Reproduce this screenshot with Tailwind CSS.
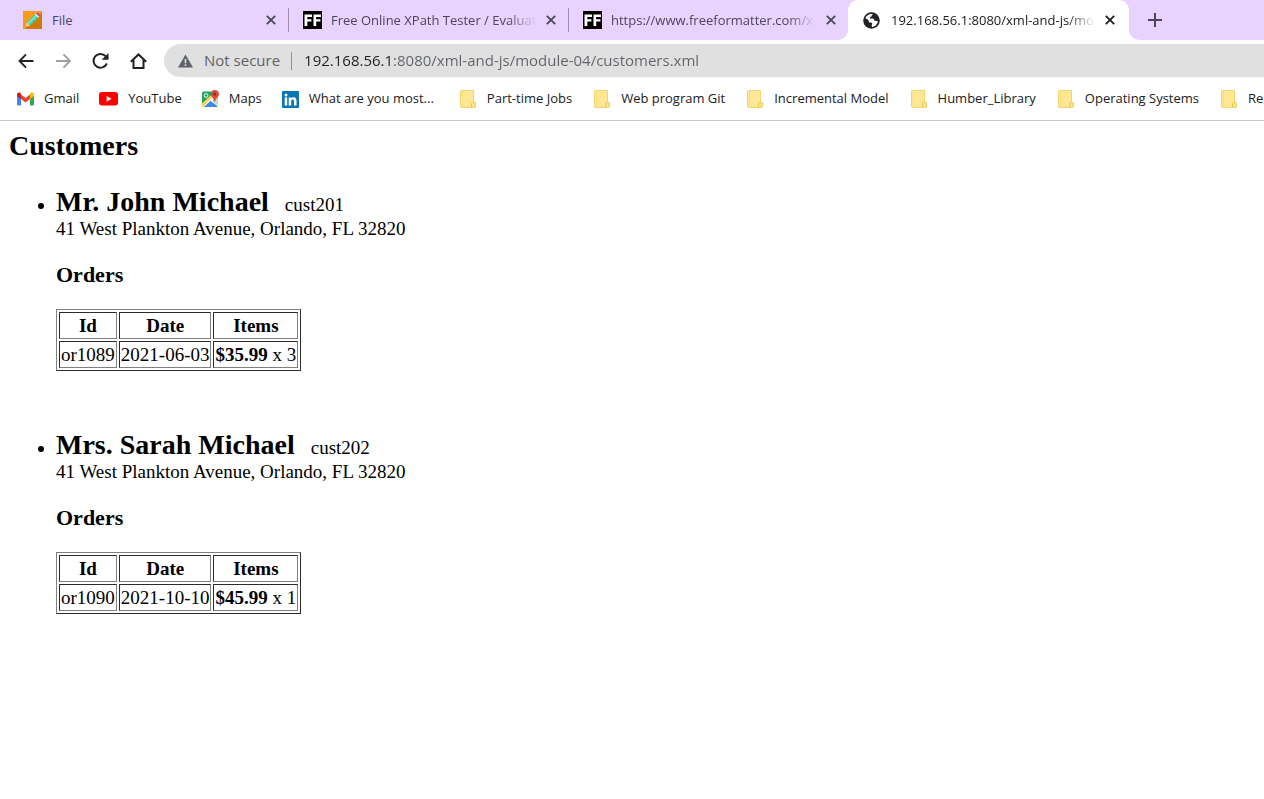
<!DOCTYPE html>
<html lang="en">
<head>
<meta charset="utf-8">
<title>Customers</title>
<script src="https://cdn.jsdelivr.net/npm/@tailwindcss/browser@4"></script>
</head>
<body class="min-h-screen overflow-x-hidden bg-white text-[#202124]">
<svg class="hidden" aria-hidden="true">
  <symbol id="close" viewBox="0 0 10 10"><path d="M.8.8l8.400 8.400M9.200.8L.8 9.200" fill="none" stroke="currentColor" stroke-width="1.900"/></symbol>
  <symbol id="ff" viewBox="0 0 19 18"><path d="M0 0h19v18H0z" fill="#000"/><path d="M1.500 3.500H9v2.400H4.300v2.300h4.100v2.400H4.300V15H1.500zM10.500 3.500H18v2.400h-4.800v2.300h4.200v2.400h-4.200V15h-2.700z" fill="#fff"/></symbol>
  <symbol id="folder" viewBox="0 0 17 18"><path d="M1.500.5H13.500v12h1.200c.5 0 .8.3.8.8v2.200c0 1.100-.8 2-1.900 2H1.500c-.6 0-1-.4-1-1v-15c0-.6.4-1 1-1z" fill="#ffe793" stroke="#efd56e"/><path d="M2.500 1v15.500" stroke="#f8df80"/><path d="M11.500 17v-3c0-1 .6-1.500 1.500-1.500s2.500 0 2.500 1.200v1.500c0 1.300-.8 2.300-2 2.300" fill="#ffe48a" stroke="#e6c850"/></symbol>
</svg>

<header class="font-['Open_Sans','Noto_Sans',sans-serif]">
  <div class="flex h-10 bg-white text-[13px] text-[#4d4558]" role="tablist" aria-label="Open tabs">
    <div class="flex shrink-0 rounded-br-[10px] bg-[#e8d3ff] pl-[9px]">
      <div class="flex w-[280px] items-center pl-[14px]">
        <button role="tab" class="flex min-w-0 flex-1 items-center gap-[10px] text-left">
          <svg class="h-[18px] w-[19px] shrink-0" viewBox="0 0 19 18"><path d="M0 0h19v18H0z" fill="#f79a1b"/><path d="M19 1.500V18H2l2-3z" fill="#cf7a08"/><path d="M2.600 15.700l1.200-4.300 3.200 3.200z" fill="#ffd9a0"/><path d="M3.800 11.400l8-8 3.400 3.300-8.200 7.900z" fill="#3fd3b4"/><path d="M5.200 12.700l8-8" stroke="#8df0d8" stroke-width="1.200"/><path d="M11.800 3.400l1.200-1 3.300 3.100-1.100 1.200z" fill="#dfe8f2"/><path d="M13 2.400c1-.9 2-.5 2.700.2s1.300 1.900.6 2.900z" fill="#a03fb8"/></svg>
          <span class="pt-[2px]">File</span>
        </button>
        <button aria-label="Close File"><svg class="size-[10px]"><use href="#close"/></svg></button>
        <span class="ml-3 h-6 w-px bg-[#9d8fae]"></span>
      </div>
      <div class="flex w-[280px] items-center pl-[14px]">
        <button role="tab" class="flex min-w-0 flex-1 items-center gap-[9px] text-left">
          <svg class="h-[18px] w-[19px] shrink-0"><use href="#ff"/></svg>
          <span class="mr-[10px] flex-1 overflow-hidden pt-[2px] whitespace-nowrap [mask-image:linear-gradient(to_left,transparent,black_28px)]">Free Online XPath Tester / Evaluat</span>
        </button>
        <button aria-label="Close Free Online XPath Tester"><svg class="size-[10px]"><use href="#close"/></svg></button>
        <span class="ml-3 h-6 w-px bg-[#9d8fae]"></span>
      </div>
      <div class="flex w-[279px] items-center pr-3 pl-[14px]">
        <button role="tab" class="flex min-w-0 flex-1 items-center gap-[9px] text-left">
          <svg class="h-[18px] w-[19px] shrink-0"><use href="#ff"/></svg>
          <span class="mr-[10px] flex-1 overflow-hidden pt-[2px] whitespace-nowrap [mask-image:linear-gradient(to_left,transparent,black_28px)]">https://www.freeformatter.com/x</span>
        </button>
        <button aria-label="Close freeformatter.com"><svg class="size-[10px]"><use href="#close"/></svg></button>
      </div>
    </div>
    <div class="flex shrink-0 bg-[#e8d3ff]">
      <div class="flex w-[281px] items-center rounded-t-[10px] bg-white pr-[14px] pl-[15px] text-[#202124]">
        <button role="tab" aria-selected="true" class="flex min-w-0 flex-1 items-center gap-[11px] text-left">
          <svg class="size-[17px] shrink-0" viewBox="0 0 17 17"><circle cx="8.500" cy="8.500" r="8.300" fill="#202124"/><path d="M2.300 6.200C3.200 3.700 5.600 2 8.200 2c.9 0 1.400.1 1.900.3-.7.500-1.500.7-1.500 1.600 0 .6-.4.900-1 .9-.6.100-.9.500-.8 1 .1.700.8.800 1.900.8 1.500 0 2.300.4 2.500 1.500.2.800 1 .9 1.900.9h1.700c-.1 3-2.500 5.600-5.500 5.900-.5-.4-.7-.9-.6-1.700.1-.7.500-.9.500-1.600-.1-.9-1-.9-2-1-1.300-.1-1.500-.7-1.600-1.800-.1-.8-.7-1.300-1.300-1.600z" fill="#fff"/></svg>
          <span class="mr-[10px] flex-1 overflow-hidden pt-[2px] whitespace-nowrap [mask-image:linear-gradient(to_left,transparent,black_28px)]">192.168.56.1:8080/xml-and-js/mo</span>
        </button>
        <button aria-label="Close current tab"><svg class="size-[10px]"><use href="#close"/></svg></button>
      </div>
    </div>
    <div class="flex flex-1 items-center rounded-bl-[10px] bg-[#e8d3ff] pl-[19px]">
      <button aria-label="New tab"><svg class="size-[14px]" viewBox="0 0 14 14"><path d="M7 0v14M0 7h14" stroke="#4d4558" stroke-width="2"/></svg></button>
    </div>
  </div>

  <div class="flex h-[41px] items-center pl-[18px]">
    <nav class="flex items-center gap-[20px]" aria-label="Navigation">
      <button aria-label="Back"><svg class="h-[18px] w-[17px]" viewBox="0 0 17 18" fill="none" stroke="#202124" stroke-width="1.900"><path d="M15.500 9H2M8 2.300L1.500 9 8 15.700"/></svg></button>
      <button aria-label="Forward"><svg class="h-[18px] w-[17px]" viewBox="0 0 17 18" fill="none" stroke="#a0a0a3" stroke-width="1.900"><path d="M1 9h13.500M8.500 2.300L15 9l-6.500 6.700"/></svg></button>
      <button aria-label="Reload"><svg class="h-[18px] w-[18px]" viewBox="0 0 18 18"><path d="M14.800 11.500A6.900 6.900 0 1 1 13.600 4.200" fill="none" stroke="#202124" stroke-width="2"/><path d="M16.500 1v6.800H9.700z" fill="#202124"/></svg></button>
      <button aria-label="Home"><svg class="h-[18px] w-[17px]" viewBox="0 0 17 18" fill="none" stroke="#202124" stroke-width="2"><path d="M.8 9.800L8.500 2.500l7.700 7.300M3.500 8v8h10V8"/></svg></button>
    </nav>
    <form class="ml-[17px] flex h-[33px] min-w-0 flex-1 items-center rounded-l-full bg-[#e0e0e0] pl-[14px] text-[15px] text-[#5f6368]">
      <svg class="h-[14px] w-[15px] shrink-0" viewBox="0 0 15 14"><path d="M7.500.5L15 13.500H0z" fill="#5f6368"/><path d="M6.700 5h1.600v4.200H6.700zM6.700 10.300h1.600v1.600H6.700z" fill="#e0e0e0"/></svg>
      <label for="url" class="ml-[11px] whitespace-nowrap">Not secure</label>
      <span class="mr-3 ml-[11px] h-[18px] w-px bg-[#909396]"></span>
      <input id="url" type="text" value="192.168.56.1:8080/xml-and-js/module-04/customers.xml" class="min-w-0 flex-1 bg-[linear-gradient(90deg,#202124_89px,#5f6368_89px)] bg-clip-text text-transparent outline-none">
    </form>
  </div>

  <nav class="flex h-10 items-center gap-[26px] border-b border-[#c8c8c8] pb-[3px] pl-[17px] text-[13px] whitespace-nowrap" aria-label="Bookmarks">
    <div class="flex shrink-0 items-center gap-[20px]">
      <a href="#" class="flex items-center gap-[10px]"><svg class="h-[18px] w-[17px]" viewBox="0 0 17 18"><path d="M0 4.500L4 7.500V15.500H1.200C.5 15.500 0 15 0 14.300z" fill="#4285f4"/><path d="M17 4.500L13 7.500V15.500h2.800c.7 0 1.200-.5 1.200-1.200z" fill="#34a853"/><path d="M4 4.500l4.500 3.400L13 4.500v4.600l-4.500 3.400L4 9.100z" fill="#ea4335"/><path d="M0 4.500C0 2.700 2 2 3.200 3L4 3.600v5.500L0 6.100z" fill="#c5221f"/><path d="M17 4.500c0-1.800-2-2.500-3.200-1.500l-.8.600v5.500l4-3z" fill="#fbbc04"/></svg>Gmail</a>
      <a href="#" class="flex items-center gap-[10px]"><svg class="h-[14px] w-[19px]" viewBox="0 0 19 14"><rect width="19" height="13.500" rx="3" fill="#f00"/><path d="M7.600 3.900l5 2.900-5 2.900z" fill="#fff"/></svg>YouTube</a>
      <a href="#" class="flex items-center gap-[10px]"><svg class="h-[18px] w-[17px]" viewBox="0 0 17 18"><rect y="1.500" width="15.500" height="15.500" rx="1.500" fill="#1ea362"/><path d="M10 8l5.500-2v10z" fill="#d7d7d7"/><path d="M0 14.500L10 5l3.500 3.500L1.800 17C.7 17 0 16.200 0 15.400z" fill="#fff"/><path d="M0 13.600L9.500 4.500l1.500 2L1 16.700c-.6-.2-1-.7-1-1.300z" fill="#ffd04b"/><path d="M2 17l6.500-6.300L14.800 17z" fill="#4285f4"/><path d="M8.500 10.700l1.200-1.200 5.800 5.800v1z" fill="#fff"/><circle cx="4" cy="5.500" r="1.900" fill="none" stroke="#fff"/><path d="M12.800 0c2.400 0 4.200 1.800 4.200 4.100 0 2.800-3.600 4.200-4.100 8.400-.6-4.200-4.200-5.600-4.200-8.400C8.700 1.800 10.500 0 12.800 0z" fill="#dd4b3e"/><circle cx="12.800" cy="4" r="1.500" fill="#822f2b"/></svg>Maps</a>
      <a href="#" class="flex items-center gap-[10px]"><svg class="size-[17px]" viewBox="0 0 17 17"><rect width="17" height="17" rx="1" fill="#0a75b5"/><path d="M2.700 6.500h2.500v8H2.700zM6.700 6.500h2.400v1.100c.5-.8 1.300-1.300 2.400-1.300 2.400 0 3 1.500 3 3.700v4.500H12v-4c0-1.100-.1-2-1.300-2s-1.500.9-1.500 2v4H6.700z" fill="#fff"/><circle cx="4" cy="3.900" r="1.500" fill="#fff"/></svg>What are you most...</a>
    </div>
    <div class="flex shrink-0 items-center gap-[22px]">
      <a href="#" class="flex items-center gap-[10px]"><svg class="h-[18px] w-[17px]"><use href="#folder"/></svg>Part-time Jobs</a>
      <a href="#" class="flex items-center gap-[10px]"><svg class="h-[18px] w-[17px]"><use href="#folder"/></svg>Web program Git</a>
      <a href="#" class="flex items-center gap-[10px]"><svg class="h-[18px] w-[17px]"><use href="#folder"/></svg>Incremental Model</a>
      <a href="#" class="flex items-center gap-[10px]"><svg class="h-[18px] w-[17px]"><use href="#folder"/></svg>Humber_Library</a>
      <a href="#" class="flex items-center gap-[10px]"><svg class="h-[18px] w-[17px]"><use href="#folder"/></svg>Operating Systems</a>
      <a href="#" class="flex items-center gap-[10px]"><svg class="h-[18px] w-[17px]"><use href="#folder"/></svg>Re</a>
    </div>
  </nav>
</header>

<main class="px-[9px] pt-2 font-['Liberation_Serif',serif] text-[19px] leading-[22px] text-black">
  <h1 class="text-[28px] leading-[34px] font-bold">Customers</h1>
  <ul class="mt-[26px] list-disc pl-[47px]">
    <li class="mb-[61px]">
      <div class="leading-[26px]"><strong class="mr-4 text-[28px]">Mr. John Michael</strong>cust201</div>
      <p>41 West Plankton Avenue, Orlando, FL 32820</p>
      <h2 class="mt-[22px] mb-[22px] text-[22px] leading-[25px] font-bold">Orders</h2>
      <table class="border-separate border-spacing-[2px] border border-t-[#808080] border-r-[#2c2c2c] border-b-[#2c2c2c] border-l-[#808080] leading-[23px]">
        <thead><tr>
          <th class="border border-t-[#2c2c2c] border-r-[#808080] border-b-[#808080] border-l-[#2c2c2c] p-px">Id</th>
          <th class="border border-t-[#2c2c2c] border-r-[#808080] border-b-[#808080] border-l-[#2c2c2c] p-px">Date</th>
          <th class="border border-t-[#2c2c2c] border-r-[#808080] border-b-[#808080] border-l-[#2c2c2c] p-px">Items</th>
        </tr></thead>
        <tbody><tr>
          <td class="border border-t-[#2c2c2c] border-r-[#808080] border-b-[#808080] border-l-[#2c2c2c] p-px">or1089</td>
          <td class="border border-t-[#2c2c2c] border-r-[#808080] border-b-[#808080] border-l-[#2c2c2c] p-px">2021-06-03</td>
          <td class="border border-t-[#2c2c2c] border-r-[#808080] border-b-[#808080] border-l-[#2c2c2c] p-px"><b>$35.99</b> x 3</td>
        </tr></tbody>
      </table>
    </li>
    <li>
      <div class="leading-[26px]"><strong class="mr-4 text-[28px]">Mrs. Sarah Michael</strong>cust202</div>
      <p>41 West Plankton Avenue, Orlando, FL 32820</p>
      <h2 class="mt-[22px] mb-[22px] text-[22px] leading-[25px] font-bold">Orders</h2>
      <table class="border-separate border-spacing-[2px] border border-t-[#808080] border-r-[#2c2c2c] border-b-[#2c2c2c] border-l-[#808080] leading-[23px]">
        <thead><tr>
          <th class="border border-t-[#2c2c2c] border-r-[#808080] border-b-[#808080] border-l-[#2c2c2c] p-px">Id</th>
          <th class="border border-t-[#2c2c2c] border-r-[#808080] border-b-[#808080] border-l-[#2c2c2c] p-px">Date</th>
          <th class="border border-t-[#2c2c2c] border-r-[#808080] border-b-[#808080] border-l-[#2c2c2c] p-px">Items</th>
        </tr></thead>
        <tbody><tr>
          <td class="border border-t-[#2c2c2c] border-r-[#808080] border-b-[#808080] border-l-[#2c2c2c] p-px">or1090</td>
          <td class="border border-t-[#2c2c2c] border-r-[#808080] border-b-[#808080] border-l-[#2c2c2c] p-px">2021-10-10</td>
          <td class="border border-t-[#2c2c2c] border-r-[#808080] border-b-[#808080] border-l-[#2c2c2c] p-px"><b>$45.99</b> x 1</td>
        </tr></tbody>
      </table>
    </li>
  </ul>
</main>
</body>
</html>
